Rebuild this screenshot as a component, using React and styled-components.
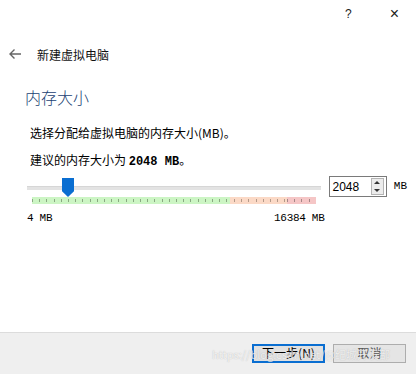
import React from "react";
import styled, { createGlobalStyle } from "styled-components";

const GlobalStyle = createGlobalStyle`
  html, body {
    margin: 0;
    padding: 0;
    background: #ffffff;
  }
  body {
    font-family: "Noto Sans CJK SC", "Liberation Sans", sans-serif;
    color: #000;
  }
`;

const Window = styled.div`
  width: 416px;
  height: 374px;
  display: flex;
  flex-direction: column;
  background: #fff;
  overflow: hidden;
`;

const TitleBar = styled.div`
  height: 28px;
  display: flex;
  justify-content: flex-end;
  align-items: center;
  padding-right: 17px;
  gap: 38px;
`;

const TitleButton = styled.span`
  font-family: "Liberation Sans", sans-serif;
  font-size: ${(p) => p.size || 13}px;
  color: #222;
  line-height: 1;
`;

const Header = styled.div`
  display: flex;
  align-items: center;
  height: 22px;
  margin-top: 15px;
  padding-left: 8px;
  gap: 15px;
`;

const Title = styled.span`
  font-size: 12px;
  color: #111;
`;

const Heading = styled.div`
  margin-top: 20px;
  padding-left: 25px;
  font-size: 16px;
  font-weight: 300;
  color: #1b3f73;
  line-height: 24px;
`;

const Body = styled.div`
  padding: 16px 30px 0 27px;
  display: flex;
  flex-direction: column;
`;

const Line = styled.div`
  font-size: 12px;
  line-height: 16px;
  margin-bottom: 11px;
  padding-left: 3px;
  b {
    font-family: "Liberation Mono", monospace;
    font-weight: 700;
  }
`;

const SliderRow = styled.div`
  display: flex;
  align-items: flex-start;
  margin-top: -2px;
  width: 380px;
`;

const SliderCol = styled.div`
  width: 298px;
  display: flex;
  flex-direction: column;
`;

const TrackArea = styled.div`
  position: relative;
  height: 16px;
`;

const Track = styled.div`
  margin-top: 7px;
  height: 3px;
  background: #e3e3e3;
  border-top: 1px solid #d6d6d6;
`;

const Thumb = styled.div`
  position: absolute;
  top: -1px;
  width: 12px;
  height: 19px;
  background: #0a6ed1;
  clip-path: polygon(0 0, 100% 0, 100% 70%, 50% 100%, 0 70%);
`;

const Scale = styled.div`
  margin: 2px 5px 0 5px;
  height: 7px;
  display: flex;
`;

const Zone = styled.div`
  flex: ${(p) => p.grow};
  background-color: ${(p) => p.color};
  background-image: repeating-linear-gradient(
    to right,
    ${(p) => p.tick} 0,
    ${(p) => p.tick} 1px,
    transparent 1px,
    transparent 7.2px
  );
  background-size: 100% 3px;
  background-position: ${(p) => p.offset}px 2px;
  background-repeat: repeat-x;
`;

const Labels = styled.div`
  display: flex;
  justify-content: space-between;
  margin-top: 7px;
  margin-right: -3px;
  font-family: "Liberation Mono", monospace;
  font-size: 11px;
  line-height: 14px;
  letter-spacing: -0.3px;
`;

const SpinBox = styled.div`
  margin-left: 8px;
  margin-top: -3px;
  width: 56px;
  height: 19px;
  border: 1px solid #7a7a7a;
  display: flex;
  align-items: center;
  background: #fff;
`;

const SpinValue = styled.span`
  flex: 1;
  padding-left: 2px;
  font-family: "Liberation Sans", sans-serif;
  font-size: 12px;
`;

const SpinButtons = styled.div`
  width: 11px;
  height: 15px;
  margin-right: 2px;
  display: flex;
  flex-direction: column;
  border: 1px solid #b5b5b5;
  background: #ececec;
`;

const SpinArrow = styled.div`
  flex: 1;
  display: flex;
  align-items: center;
  justify-content: center;
  &::after {
    content: "";
    border-left: 3px solid transparent;
    border-right: 3px solid transparent;
    ${(p) => (p.up ? "border-bottom" : "border-top")}: 3px solid #333;
  }
`;

const Unit = styled.span`
  margin-left: 7px;
  margin-top: 1px;
  font-family: "Liberation Mono", monospace;
  font-size: 11px;
`;

const Spacer = styled.div`
  flex: 1;
`;

const Footer = styled.div`
  height: 40px;
  border-top: 1px solid #dcdcdc;
  background: #efefef;
  display: flex;
  justify-content: flex-end;
  align-items: center;
  gap: 8px;
  padding: 0 10px 1px 0;
  position: relative;
`;

const Button = styled.button`
  width: 73px;
  height: 19px;
  box-sizing: border-box;
  font-family: "Noto Sans CJK SC", sans-serif;
  font-size: 12px;
  line-height: 1;
  padding: 0;
  background: ${(p) => (p.primary ? "#e1e1e1" : "#e5e5e5")};
  border: ${(p) => (p.primary ? "2px solid #0a6ed1" : "1px solid #adadad")};
  color: ${(p) => (p.primary ? "#000" : "#555")};
`;

const Watermark = styled.div`
  position: absolute;
  left: 212px;
  top: 13px;
  font-size: 11px;
  color: rgba(255, 255, 255, 0.75);
  text-shadow: 0 0 1px rgba(120, 120, 120, 0.5);
  white-space: nowrap;
  pointer-events: none;
`;

const BackArrow = () => (
  <svg width="14" height="12" viewBox="0 0 14 12">
    <path d="M13 6H2M6.5 1.5L2 6l4.5 4.5" fill="none" stroke="#666" strokeWidth="1.4" />
  </svg>
);

export default function App() {
  const min = 4;
  const max = 16384;
  const value = 2048;
  const scaleWidth = 288;
  const thumbLeft = 5 + (value / max) * scaleWidth - 6;

  return (
    <>
      <GlobalStyle />
      <Window>
        <TitleBar>
          <TitleButton size={12}>?</TitleButton>
          <TitleButton size={16}>×</TitleButton>
        </TitleBar>
        <Header>
          <BackArrow />
          <Title>新建虚拟电脑</Title>
        </Header>
        <Heading>内存大小</Heading>
        <Body>
          <Line>选择分配给虚拟电脑的内存大小(MB)。</Line>
          <Line>
            建议的内存大小为 <b>2048 MB</b>。
          </Line>
          <SliderRow>
            <SliderCol>
              <TrackArea>
                <Track />
                <Thumb style={{ left: thumbLeft }} />
              </TrackArea>
              <Scale>
                <Zone grow={200} color="#ccf5c4" tick="#8aa882" offset={0} />
                <Zone grow={58} color="#fbd9c6" tick="#b39a8a" offset={4} />
                <Zone grow={30} color="#f5c6c6" tick="#a58888" offset={0} />
              </Scale>
              <Labels>
                <span>{min} MB</span>
                <span>{max} MB</span>
              </Labels>
            </SliderCol>
            <SpinBox>
              <SpinValue>{value}</SpinValue>
              <SpinButtons>
                <SpinArrow up />
                <SpinArrow />
              </SpinButtons>
            </SpinBox>
            <Unit>MB</Unit>
          </SliderRow>
        </Body>
        <Spacer />
        <Footer>
          <Button primary>下一步(N)</Button>
          <Button>取消</Button>
          <Watermark>https://blog.csdn.net/@纪城开发部</Watermark>
        </Footer>
      </Window>
    </>
  );
}
